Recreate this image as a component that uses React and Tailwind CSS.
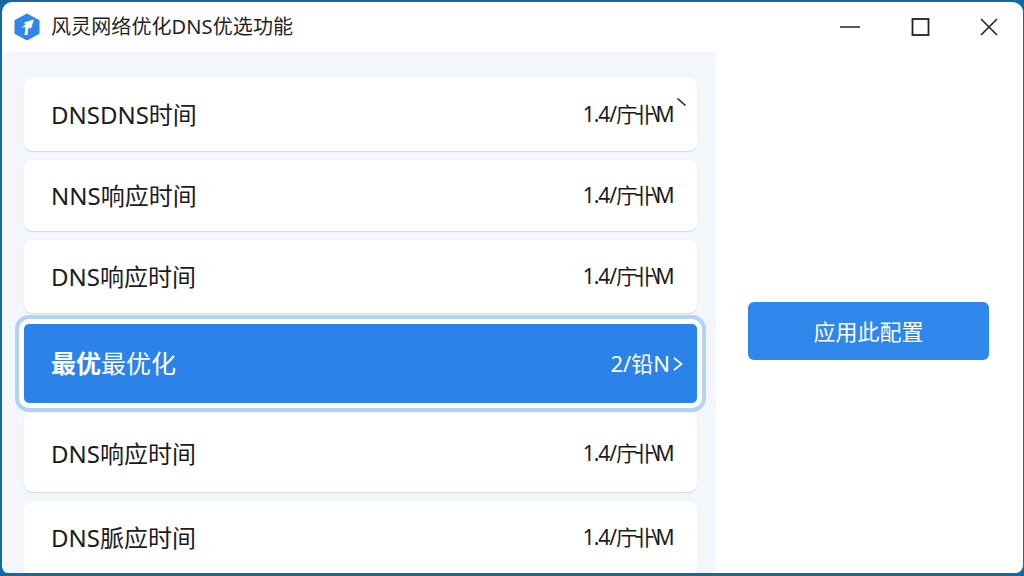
const font = { fontFamily: '"Noto Sans", "Noto Sans CJK SC", sans-serif' };

const rows = [
  { name: "DNSDNS时间", chevron: true, h: "h-[73px]" },
  { name: "NNS响应时间", h: "h-[71px]" },
  { name: "DNS响应时间", h: "h-[73px]" },
];

const lowerRows = [
  { name: "DNS响应时间", h: "h-[79px] pt-[3px]" },
  { name: "DNS脈应时间", h: "h-[72px]", flat: true },
];

function Logo() {
  return (
    <svg width="26" height="28" viewBox="0 0 26 28" className="shrink-0">
      <path d="M13 0.5 25.5 7.2V20.8L13 27.5 0.5 20.8V7.2Z" fill="#2f86eb" />
      <path d="M20 6.5 10 9.5 11.5 11.5 7.5 14.5 11.5 14 10.5 22 13.5 22 14.5 14.5 17 15.5Z" fill="#ffffff" />
    </svg>
  );
}

function Row({ name, chevron, h, flat }) {
  return (
    <div className={"relative flex items-center justify-between rounded-lg bg-white pl-[27px] pr-[26px] text-[#1b1b1b] " + h + (flat ? "" : " shadow-[0_1px_1px_rgba(0,0,0,0.13)]")}>
      <span className="text-[24px]">{name}</span>
      <span className="flex items-center text-[21px]">
        <span className="tracking-[-1px]">1.4/</span>
        <span className="tracking-[-3.5px]">庁卝\M</span>
      </span>
      {chevron ? (
        <svg width="12" height="12" viewBox="0 0 12 12" className="absolute right-[9px] top-[19px]">
          <path d="M1.5 1.5 9.5 8.5" stroke="#222" strokeWidth="1.6" fill="none" />
        </svg>
      ) : null}
    </div>
  );
}

export default function App() {
  return (
    <div style={font} className="h-[576px] w-[1024px] overflow-hidden bg-[#17689f]">
      <div className="flex h-[573px] flex-col overflow-hidden rounded-t-[12px] rounded-b-[8px] border-l-2 border-t-2 border-r border-[#17689f] bg-white">
        <div className="flex h-[50px] shrink-0 items-center pl-[12px]">
          <Logo />
          <span className="ml-[11px] text-[20px] tracking-[0.1px] text-[#1f1f1f]">风灵网络优化DNS优选功能</span>
          <div className="ml-auto flex items-center">
            <svg width="24" height="24" viewBox="0 0 24 24" className="mr-[47px]">
              <path d="M0 12H20" stroke="#222" strokeWidth="1.6" />
            </svg>
            <svg width="20" height="20" viewBox="0 0 20 20" className="mr-[48px]">
              <rect x="1.5" y="2" width="16" height="16" fill="none" stroke="#222" strokeWidth="1.8" />
            </svg>
            <svg width="20" height="20" viewBox="0 0 20 20" className="mr-[24px]">
              <path d="M2 2 18 18M18 2 2 18" stroke="#222" strokeWidth="1.6" />
            </svg>
          </div>
        </div>
        <div className="flex min-h-0 flex-1">
          <div className="w-[714px] shrink-0 bg-[#f3f6fb] pl-[22px] pr-[19px] pt-[26px]">
            <div className="flex flex-col gap-[9px]">
              {rows.map((row) => (
                <Row key={row.name} {...row} />
              ))}
            </div>
            <div className="relative mb-[10px] mt-[11px] flex h-[79px] items-center justify-between rounded-[5px] bg-[#2b82e8] pl-[27px] pr-[13px] text-white outline-4 outline-offset-[5px] outline-[#b4d3f4] ring-[5px] ring-white">
              <span className="text-[25px]">
                <b className="font-bold">最优</b>最优化
              </span>
              <span className="flex items-center text-[22px]">
                2/铅N
                <svg width="12" height="16" viewBox="0 0 12 16" className="ml-[2px]">
                  <path d="M2 2 9.5 8 2 14" stroke="#fff" strokeWidth="1.7" fill="none" />
                </svg>
              </span>
            </div>
            <div className="flex flex-col gap-[10px]">
              {lowerRows.map((row) => (
                <Row key={row.name} {...row} />
              ))}
            </div>
          </div>
          <div className="flex flex-1 items-center justify-center pr-[2px] pt-[37px]">
            <div className="flex h-[58px] w-[241px] items-center justify-center rounded-md bg-[#2f86eb] text-[22px] text-white">
              应用此配置
            </div>
          </div>
        </div>
      </div>
    </div>
  );
}
